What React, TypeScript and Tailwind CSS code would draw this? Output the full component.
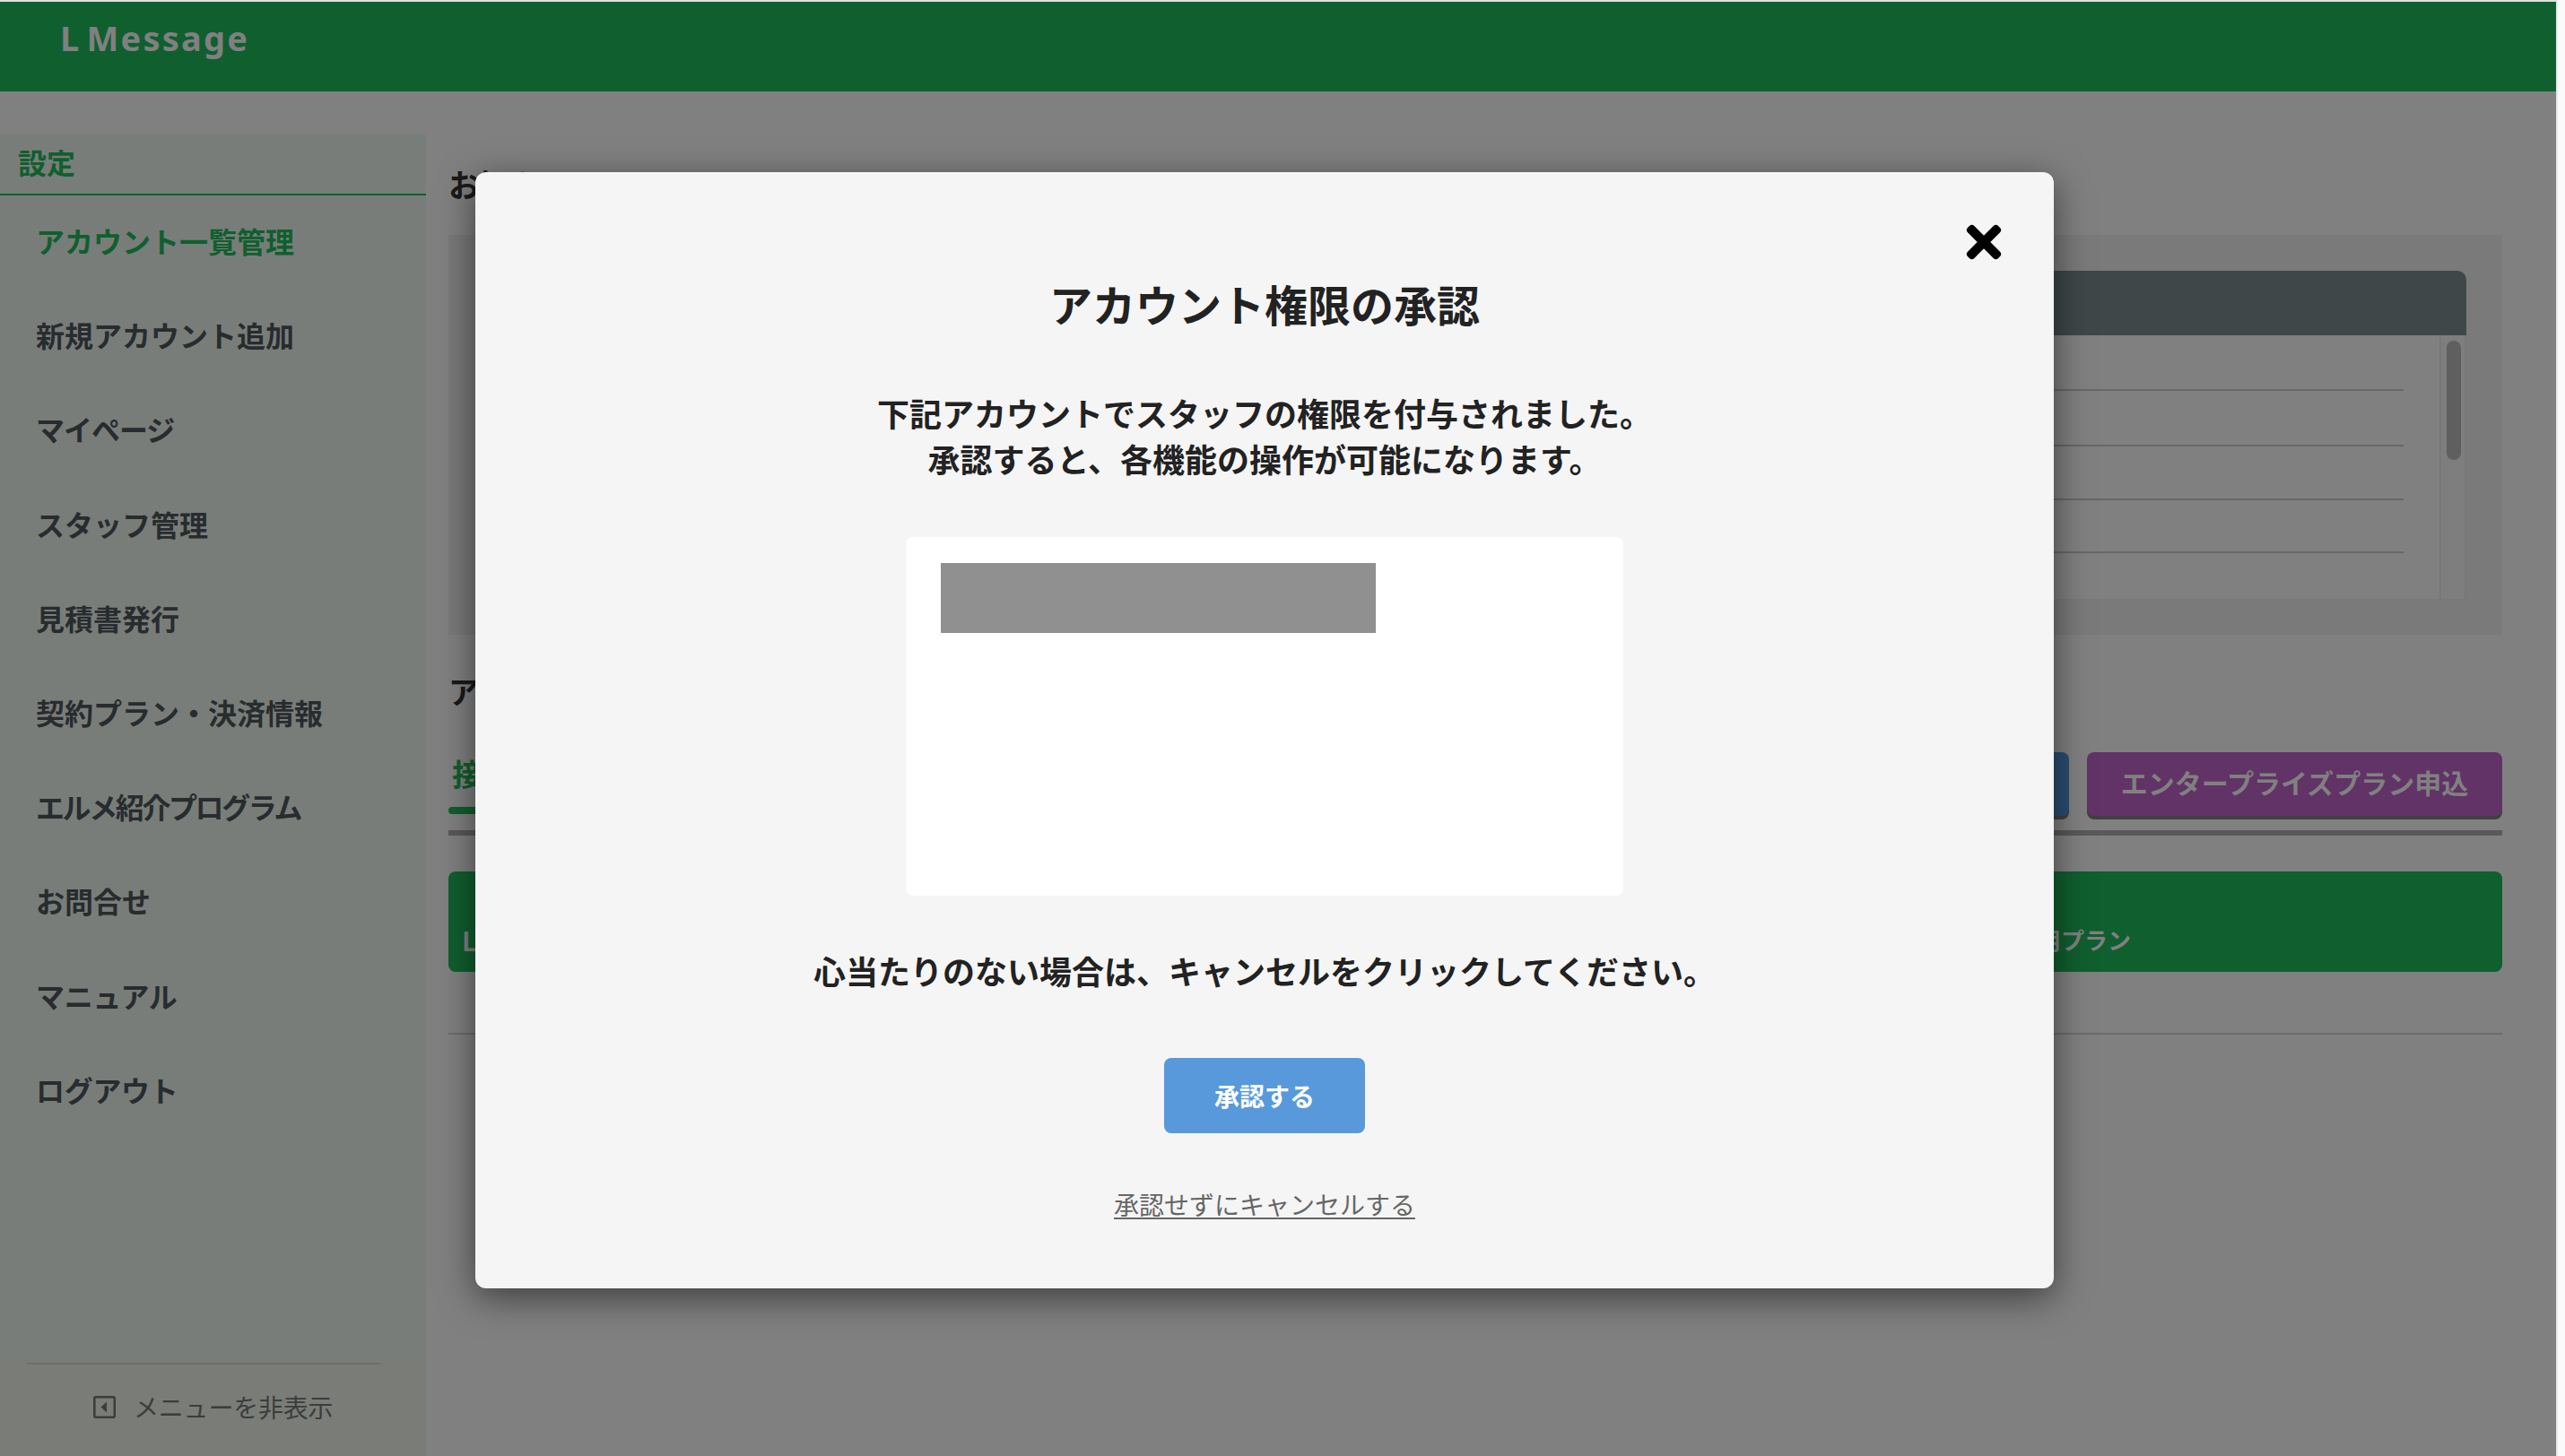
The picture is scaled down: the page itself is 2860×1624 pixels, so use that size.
import { useState } from "react"
import { FaTimes } from "react-icons/fa"

const menuItems = [
  { label: "アカウント一覧管理", spacing: "", active: true },
  { label: "新規アカウント追加", spacing: "" },
  { label: "マイページ", spacing: "tracking-[-1px]" },
  { label: "スタッフ管理", spacing: "" },
  { label: "見積書発行", spacing: "" },
  { label: "契約プラン・決済情報", spacing: "" },
  { label: "エルメ紹介プログラム", spacing: "tracking-[-2.4px]" },
  { label: "お問合せ", spacing: "" },
  { label: "マニュアル", spacing: "tracking-[-0.3px]" },
  { label: "ログアウト", spacing: "tracking-[-0.3px]" },
]

const Header = () => (
  <header className="h-[102px] border-t-2 border-[#dde1dd] bg-[#105f2f] pl-[67px]">
    <h1 className="pt-[14px] font-['Noto_Sans'] text-[38px] leading-[52px] font-bold tracking-[2.2px] [word-spacing:-6px] text-[#808080]">
      L Message
    </h1>
  </header>
)

const Sidebar = () => (
  <aside className="mt-12 flex w-[475px] shrink-0 flex-col bg-[#797d79]">
    <h2 className="h-[68px] border-b-2 border-[#105f2f] pl-5 text-[32px] leading-[60px] font-bold text-[#105f2f]">
      設定
    </h2>
    <nav className="flex-1">
      <ul>
        {menuItems.map((item) => (
          <li
            key={item.label}
            className={`h-[105.2px] pl-10 text-[32px] leading-[100px] font-bold ${item.spacing} ${
              item.active ? "text-[#105f2f]" : "text-[#282c2f]"
            }`}
          >
            {item.label}
          </li>
        ))}
      </ul>
    </nav>
    <div className="h-[104px] bg-[#7a7c78]">
      <div className="ml-[30px] flex h-full w-[394px] items-center border-t-2 border-[#6c6f6c] pb-2 pl-[74px] text-[28px] text-[#3c3c3c]">
        <svg className="mr-[20px] h-[25px] w-[25px]" viewBox="0 0 25 25" fill="none">
          <rect x="1.25" y="1.25" width="22.5" height="22.5" rx="1.5" stroke="#3c3c3c" strokeWidth="2.5" />
          <path d="M15 6.5v12l-6.5-6z" fill="#3c3c3c" />
        </svg>
        <span className="tracking-[-0.2px]">メニューを非表示</span>
      </div>
    </div>
  </aside>
)

const NewsTable = () => (
  <div className="flex h-[446px] flex-col bg-[#7a7a7a] px-10 py-10">
    <div className="h-[72px] rounded-t-[10px] bg-[#3f4749]" />
    <div className="flex flex-1 bg-[#808080]">
      <div className="flex-1 pr-[40px] pl-10">
        <div className="h-[62px] border-b-2 border-[#676767]" />
        <div className="h-[62px] border-b-2 border-[#676767]" />
        <div className="h-[60px] border-b-2 border-[#676767]" />
        <div className="h-[59px] border-b-2 border-[#676767]" />
      </div>
      <div className="w-[30px] border-r-2 border-l-2 border-[#777] bg-[#7e7e7e] pt-[6px] pl-[6px]">
        <div className="h-[133px] w-4 rounded-full bg-[#5f5f5f]" />
      </div>
    </div>
  </div>
)

const Main = () => (
  <main className="flex-1 pt-[72px] pr-[60px] pl-[25px]">
    <h2 className="h-[88px] text-[35px] leading-[62px] font-bold text-[#1a1a1a]">お知らせ</h2>
    <NewsTable />
    <h2 className="mt-[33px] h-[64px] text-[34px] leading-[60px] font-bold text-[#1a1a1a]">アカウント一覧</h2>
    <div className="mt-[34px] flex h-[93px] items-start justify-between border-b-[6px] border-[#595959]">
      <div className="h-[69px] w-[200px] text-[34px] font-bold text-[#105f2f]">
        <div className="h-[61px] pl-1 leading-[47px]">接続済み</div>
        <div className="h-2 rounded-full bg-[#105f2f]" />
      </div>
      <div className="flex gap-5 text-[30px] leading-[66px] font-bold text-[#808080]">
        <button className="h-[71px] w-[462px] rounded-lg bg-[#2b4d70] shadow-[0_4px_0_#404040]" />
        <button className="h-[71px] w-[463px] rounded-lg bg-[#613366] pb-[5px] shadow-[0_4px_0_#404040]">
          エンタープライズプラン申込
        </button>
      </div>
    </div>
    <div className="mt-10 flex h-28 rounded-lg bg-[#105f2f] pt-[56px] text-[26px] leading-10 font-bold text-[#808080]">
      <span className="w-[1746px] pl-[15px] text-[29px]">LINE公式アカウント名</span>
      <span>利用プラン</span>
    </div>
    <div className="mt-[68px] h-0.5 bg-[#6c6c6c]" />
  </main>
)

const ApprovalModal = ({ onClose }: { onClose: () => void }) => (
  <div className="absolute top-[191.5px] left-[530px] flex h-[1245px] w-[1760px] flex-col items-center rounded-[12px] bg-[#f5f5f5] text-[#222] shadow-[0_10px_40px_rgba(0,0,0,0.53)]">
    <button className="mt-[50px] mr-[50px] self-end" onClick={onClose} aria-label="close">
      <FaTimes className="h-[56px] w-[56px] text-black" />
    </button>
    <h3 className="mt-[4px] text-[48px] leading-[72px] font-bold">アカウント権限の承認</h3>
    <p className="mt-[61px] text-center text-[36px] leading-[51px] font-bold">
      下記アカウントでスタッフの権限を付与されました。
      <br />
      承認すると、各機能の操作が可能になります。
    </p>
    <div className="mt-[62px] h-[400px] w-[800px] rounded-lg bg-white pt-[29px] pl-[39px]">
      <div className="h-[78px] w-[485px] bg-[#909090]" />
    </div>
    <p className="mt-[58px] text-[36px] leading-[51px] font-bold">
      心当たりのない場合は、キャンセルをクリックしてください。
    </p>
    <button className="mt-[72px] h-[84px] w-[224px] rounded-lg bg-[#5899db] text-[28px] font-bold text-white">
      承認する
    </button>
    <button className="mt-[58px] text-[28px] leading-[42px] text-[#666] underline underline-offset-3" onClick={onClose}>
      承認せずにキャンセルする
    </button>
  </div>
)

const App = () => {
  const [open, setOpen] = useState(true)

  return (
    <div
      lang="ja"
      className="relative flex h-[1624px] w-[2860px] overflow-hidden bg-[#fafafa] font-['Noto_Sans_CJK_JP',sans-serif]"
    >
      <div className="flex w-[2850px] flex-col bg-[#808080]">
        <Header />
        <div className="flex flex-1">
          <Sidebar />
          <Main />
        </div>
      </div>
      <div className="w-0.5 bg-[#e8e8e8]" />
      {open && <ApprovalModal onClose={() => setOpen(false)} />}
    </div>
  )
}

export default App
